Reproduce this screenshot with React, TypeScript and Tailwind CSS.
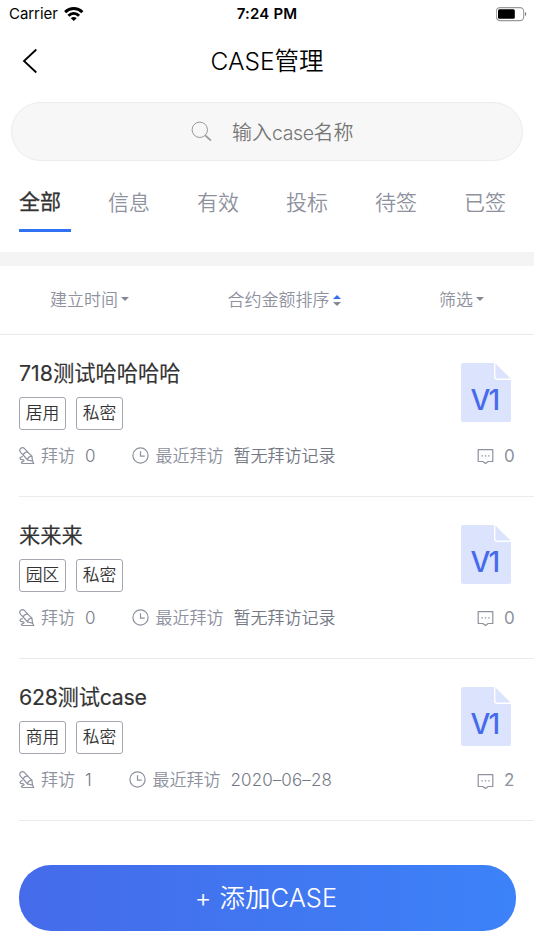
type Case = {
  name: string;
  nameClass: string;
  tags: string[];
  visits: number;
  visitClass: string;
  last: string;
  lastClass: string;
  comments: number;
};

const cases: Case[] = [
  { name: '718测试哈哈哈哈', nameClass: '', tags: ['居用', '私密'], visits: 0, visitClass: 'w-[46.5px]', last: '暂无拜访记录', lastClass: 'text-[17px]', comments: 0 },
  { name: '来来来', nameClass: '', tags: ['园区', '私密'], visits: 0, visitClass: 'w-[46.5px]', last: '暂无拜访记录', lastClass: 'text-[17px]', comments: 0 },
  { name: '628测试case', nameClass: 'tracking-[-0.25px]', tags: ['商用', '私密'], visits: 1, visitClass: 'w-[43.5px]', last: '2020–06–28', lastClass: 'text-[17px] tracking-[0.1px]', comments: 2 },
];

const tabs = ['信息', '有效', '投标', '待签', '已签'];

function Wifi() {
  return (
    <svg className="ml-[6px] h-[15px] w-[20px]" viewBox="0 0 20 15" fill="none" stroke="#000" strokeWidth="2.9">
      <path d="M1.1 5.1C6.1.3 13.4.3 18.4 5.1" />
      <path d="M4.4 8.8C7.6 5.7 11.9 5.7 15.1 8.8" />
      <path d="M9.75 14 6.8 11.2c1.7-1.6 4.2-1.6 5.9 0z" fill="#000" stroke="none" />
    </svg>
  );
}

function Battery() {
  return (
    <svg className="h-[15px] w-[32px]" viewBox="0 0 32 15">
      <rect x=".3" y=".6" width="27.4" height="13" rx="3.8" fill="none" stroke="#999" strokeWidth="1.1" />
      <rect x="2" y="2.2" width="16.8" height="9.6" rx="1.5" />
      <path d="M29 4.9c1.7.7 1.7 3.5 0 4.2z" fill="#777" />
    </svg>
  );
}

function VisitIcon() {
  return (
    <svg className="h-[18px] w-[16px] shrink-0" viewBox="0 0 16 18" fill="none" stroke="#8e919e" strokeWidth="1.2" strokeLinejoin="round" strokeLinecap="round">
      <path d="M4.3 8.2 1.6 5.3C.3 3.8.6 2.2 1.8 1.3 3 .4 4.5.4 5.8 1.8L8.5 4.8" />
      <path d="M4.3 8.2Q4.8 5.2 8.5 4.8L12.8 9.2 13.6 14.2 8.6 13z" />
      <path d="M12.8 9.2Q9 9.6 8.6 13M13.6 14.2l1.2 2.3M3.2 9.7C1.6 9.9.6 11.2 1.3 12.1c.8 1 3.6.2 3.8 1.5.2 1-2.8.9-2.8 1.9 0 .7.9 1 2 1h10.5" />
    </svg>
  );
}

function ClockIcon() {
  return (
    <svg className="h-[18px] w-[17px] shrink-0" viewBox="0 0 17 18" fill="none" stroke="#8e919e" strokeWidth="1.2">
      <circle cx="8.5" cy="8.5" r="7.6" />
      <path d="M8.5 4.2v4.9h4.2" />
    </svg>
  );
}

function CommentIcon() {
  return (
    <svg className="h-[17px] w-[17px]" viewBox="0 0 17 17" fill="none" stroke="#8e919e" strokeWidth="1.2">
      <path d="M1.2 1.7h14.6v11.8h-4.6l-2.7 2-2.7-2H1.2z" strokeLinejoin="round" />
      <path d="M4.4 7.9h1.4M7.8 7.9h1.4M11.2 7.9h1.4" strokeWidth="1.3" />
    </svg>
  );
}

function FileBadge() {
  return (
    <svg className="h-[59px] w-[50px]" viewBox="0 0 50 59">
      <path d="M2.5 0H33v13.5q0 3.5 3.5 3.5H50v39.5q0 2.5-2.5 2.5h-45Q0 59 0 56.5v-54Q0 0 2.5 0z" fill="#dce3fc" />
      <path d="M34.4.5 49.5 15.6H37q-2.6 0-2.6-2.6z" fill="#dce3fc" />
      <text x="9.6" y="47" fontFamily="Inter, sans-serif" fontSize="28" fontWeight="500" textLength="29.5" fill="#456bec">V1</text>
    </svg>
  );
}

function Caret({ up = false, blue = false }: { up?: boolean; blue?: boolean }) {
  return (
    <svg className="h-[4px] w-[8px]" viewBox="0 0 8 4" fill={blue ? '#2f6ff0' : '#858996'}>
      <path d={up ? 'M0 4 4 0l4 4z' : 'M0 0h8L4 4z'} />
    </svg>
  );
}

function CaseRow({ item }: { item: Case }) {
  return (
    <div className="ml-[19px] flex h-[162.3px] justify-between border-b-[1.5px] border-[#ebebed] pr-[19px]">
      <div className="pt-[22px]">
        <div className={`h-8 text-[21.3px] leading-8 text-[#333] [-webkit-text-stroke:0.15px_#333] ${item.nameClass}`}>{item.name}</div>
        <div className="mt-[8px] flex gap-[10px]">
          {item.tags.map((tag) => (
            <span key={tag} className="flex h-[33px] w-[47px] items-center justify-center rounded-[3px] border border-[#a5a7b0] text-[16.8px] font-[350] leading-none text-[#333]">{tag}</span>
          ))}
        </div>
        <div className="mt-[14px] flex h-6 items-center text-[17px] font-[350] leading-6 text-[#8e919e]">
          <VisitIcon />
          <span className="ml-[6px]">拜访</span>
          <span className={`ml-[10px] ${item.visitClass} text-[17px] text-[#747885]`}>{item.visits}</span>
          <ClockIcon />
          <span className="ml-[7px]">最近拜访</span>
          <span className={`ml-[10px] text-[#747885] ${item.lastClass}`}>{item.last}</span>
        </div>
      </div>
      <div className="flex flex-col items-end pt-[28px]">
        <div className="mr-[4px]"><FileBadge /></div>
        <div className="mt-[23px] flex h-6 items-center text-[17px] text-[#8e919e]">
          <CommentIcon />
          <span className="ml-[10px] w-[11px]">{item.comments}</span>
        </div>
      </div>
    </div>
  );
}

export default function App() {
  return (
    <div className="flex h-[950px] w-[534px] flex-col overflow-hidden bg-white font-['Inter','Noto_Sans_CJK_SC',sans-serif] text-black">
      <div className="grid h-[28px] grid-cols-3 items-center px-[6px] text-[15px]">
        <div className="flex items-center pl-[3px]"><span className="tracking-[-0.05px]">Carrier</span><Wifi /></div>
        <div className="text-center font-semibold tracking-[0.2px]">7:24 PM</div>
        <div className="flex justify-end"><Battery /></div>
      </div>
      <header className="grid h-[74px] grid-cols-[60px_1fr_60px] items-center pb-[9px]">
        <svg className="ml-[22px] h-[26px] w-[16px]" viewBox="0 0 16 26" fill="none" stroke="#000" strokeWidth="1.8"><path d="M14.3 1.5 2 13l12.3 11.5" /></svg>
        <h1 className="pt-px text-center text-[24.5px] font-[350]">CASE管理</h1>
      </header>
      <div className="mx-[11px] flex h-[59px] items-center rounded-full border border-[#ececec] bg-[#f7f7f7] pl-[179px] text-[20.3px] text-[#777]">
        <svg className="h-[21px] w-[21px]" viewBox="0 0 21 21" fill="none" stroke="#999"><circle cx="8.8" cy="8.8" r="7.7" strokeWidth="1" /><path d="m14.3 14.3 5.6 5.4" strokeWidth="1.7" /></svg>
        <span className="ml-[20px] pt-[3px] text-[20px] font-[350]">输入<span className="text-[19.5px] tracking-[-0.4px]">case</span>名称</span>
      </div>
      <nav className="flex h-[91px] pl-[19px] pt-[24px] text-[21px] leading-[34px] text-[#8e919e]">
        <div className="h-[47px] w-[52px] border-b-[3px] border-[#2f72f4] text-[#333] [-webkit-text-stroke:0.3px_#333]">全部</div>
        <div className="ml-[37px] flex gap-[47px] pt-px font-[350]">
          {tabs.map((tab) => <span key={tab} className="w-[42px]">{tab}</span>)}
        </div>
      </nav>
      <div className="h-[14px] shrink-0 bg-[#f4f4f4]" />
      <div className="flex h-[68.5px] items-center justify-between border-b-[1.5px] border-[#ebebed] pl-[50px] pr-[50px] pt-[2px] text-[17px] font-[350] text-[#8e919e]">
        <span className="flex items-center gap-[3px]">建立时间<span className="pb-[3px]"><Caret /></span></span>
        <span className="flex items-center gap-[3px]">合约金额排序<span className="flex flex-col gap-[3px]"><Caret up blue /><Caret /></span></span>
        <span className="flex items-center gap-[3px]">筛选<span className="pb-[3px]"><Caret /></span></span>
      </div>
      <main>{cases.map((item) => <CaseRow key={item.name} item={item} />)}</main>
      <button className="ml-[18.5px] mt-[44px] flex h-[65.5px] w-[497px] shrink-0 items-center justify-center gap-[8px] rounded-[32px] bg-linear-to-r from-[#456bea] to-[#3c82f8] pr-[2px] text-[25.5px] font-[350] text-white">
        <span>+</span><span>添加CASE</span>
      </button>
    </div>
  );
}
